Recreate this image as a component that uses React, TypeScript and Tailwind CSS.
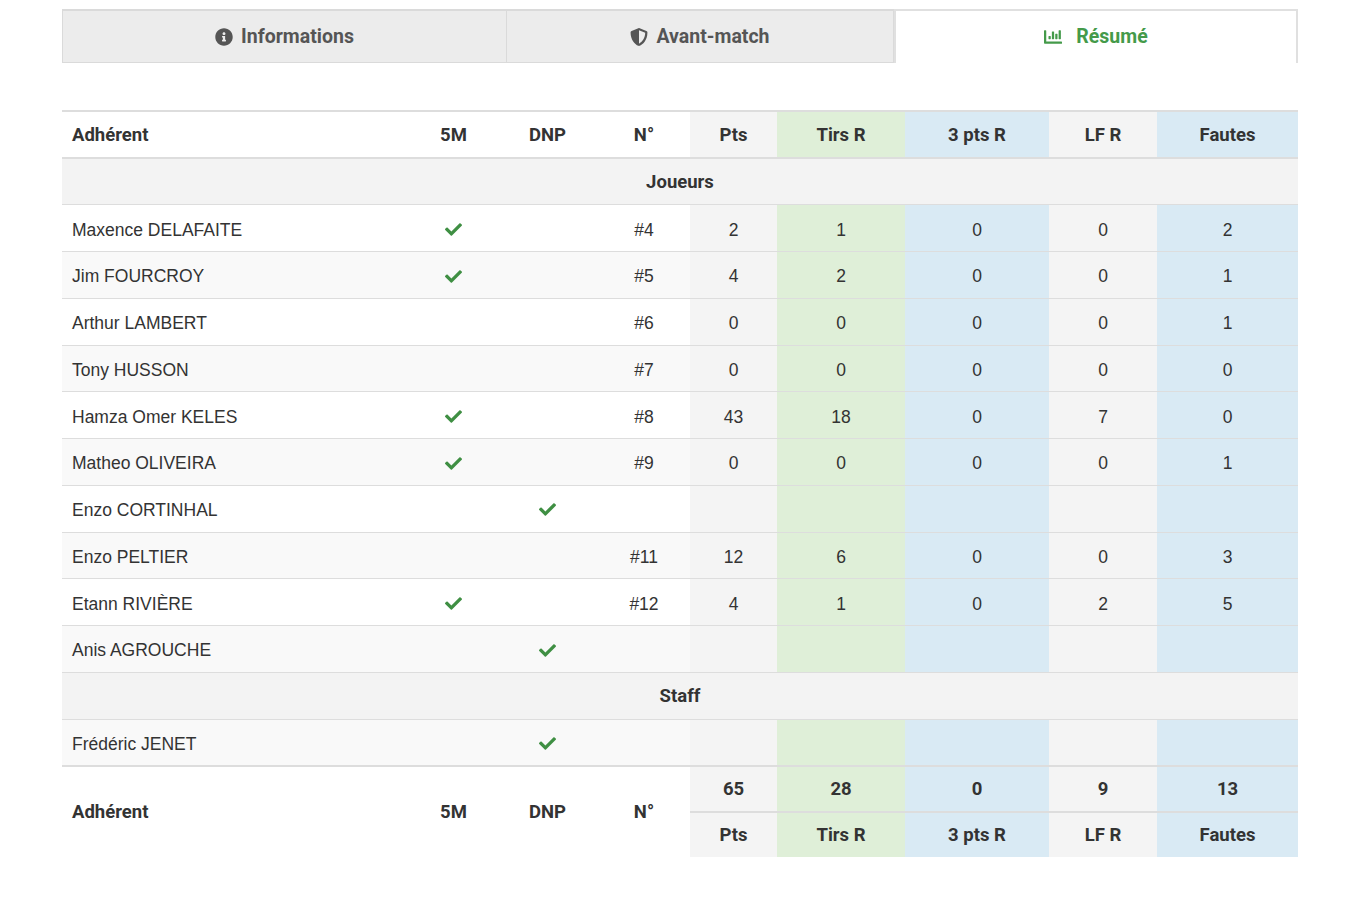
import { FaInfoCircle, FaShieldAlt, FaChartBar, FaCheck } from "react-icons/fa";

type Player = {
  name: string;
  five?: boolean;
  dnp?: boolean;
  num?: string;
  stats?: [number, number, number, number, number];
};

const joueurs: Player[] = [
  { name: "Maxence DELAFAITE", five: true, num: "#4", stats: [2, 1, 0, 0, 2] },
  { name: "Jim FOURCROY", five: true, num: "#5", stats: [4, 2, 0, 0, 1] },
  { name: "Arthur LAMBERT", num: "#6", stats: [0, 0, 0, 0, 1] },
  { name: "Tony HUSSON", num: "#7", stats: [0, 0, 0, 0, 0] },
  { name: "Hamza Omer KELES", five: true, num: "#8", stats: [43, 18, 0, 7, 0] },
  { name: "Matheo OLIVEIRA", five: true, num: "#9", stats: [0, 0, 0, 0, 1] },
  { name: "Enzo CORTINHAL", dnp: true },
  { name: "Enzo PELTIER", num: "#11", stats: [12, 6, 0, 0, 3] },
  { name: "Etann RIVIÈRE", five: true, num: "#12", stats: [4, 1, 0, 2, 5] },
  { name: "Anis AGROUCHE", dnp: true },
];

const staff: Player[] = [{ name: "Frédéric JENET", dnp: true }];

// couleurs des colonnes statistiques
const statCols = [
  { label: "Pts", bg: "bg-[#f4f4f4]", w: "w-[87px]" },
  { label: "Tirs R", bg: "bg-[#dfefd8]", w: "w-[128px]" },
  { label: "3 pts R", bg: "bg-[#d9eaf4]", w: "w-[144px]" },
  { label: "LF R", bg: "bg-[#f4f4f4]", w: "w-[108px]" },
  { label: "Fautes", bg: "bg-[#d9eaf4]", w: "w-[141px]" },
];

const totals = [65, 28, 0, 9, 13];

const head = "font-['Roboto',sans-serif] font-bold text-[18.5px] text-[#333]";
const body = "font-['Liberation_Sans',Arial,sans-serif] text-[17.5px] text-[#333]";

function Check() {
  return <FaCheck className="inline-block text-[#3f8f43]" size={17} />;
}

function Tabs() {
  return (
    <div className="flex h-[54px] font-['Roboto',sans-serif] text-[19.5px] font-bold">
      <div className="w-[445px] flex items-center justify-center gap-2 bg-[#ececec] border border-[#dadada] border-t-2 text-[#555]">
        <FaInfoCircle size={18} className="text-[#555]" />
        <span>Informations</span>
      </div>
      <div className="w-[387px] flex items-center justify-center gap-2 bg-[#ececec] border border-l-0 border-[#dadada] border-t-2 text-[#555]">
        <FaShieldAlt size={18} className="text-[#555]" />
        <span>Avant-match</span>
      </div>
      <div className="w-[404px] flex items-center justify-center gap-[14px] bg-white border-x-2 border-t-2 border-[#e0e0e0] text-[#449a4a]">
        <FaChartBar size={18} />
        <span>Résumé</span>
      </div>
    </div>
  );
}

function Row({ p, striped }: { p: Player; striped: boolean }) {
  const rowBg = striped ? "bg-[#f9f9f9]" : "bg-white";
  return (
    <tr className={`h-[46.75px] border-t border-[#dddddd] ${body}`}>
      <td className={`${rowBg} pl-[10px] pt-[3px]`}>{p.name}</td>
      <td className={`${rowBg} text-center`}>{p.five && <Check />}</td>
      <td className={`${rowBg} text-center`}>{p.dnp && <Check />}</td>
      <td className={`${rowBg} text-center pt-[3px]`}>{p.num}</td>
      {statCols.map((c, i) => (
        <td key={c.label} className={`${c.bg} text-center pt-[3px]`}>
          {p.stats ? p.stats[i] : ""}
        </td>
      ))}
    </tr>
  );
}

function GroupRow({ label }: { label: string }) {
  return (
    <tr className="h-[46.75px] border-t border-[#dddddd]">
      <td colSpan={9} className={`bg-[#f3f3f3] text-center pt-[3px] ${head}`}>
        {label}
      </td>
    </tr>
  );
}

export default function App() {
  return (
    <div className="bg-white min-h-[900px] pt-[9px] px-[62px]">
      <Tabs />
      <table className="mt-[47px] w-[1236px] border-collapse table-fixed">
        <thead>
          <tr className={`h-[47px] border-t-2 border-b-2 border-[#dddddd] ${head}`}>
            <th className="w-[348px] text-left pl-[10px] pt-[3px] bg-white">Adhérent</th>
            <th className="w-[87px] pt-[3px] bg-white">5M</th>
            <th className="w-[101px] pt-[3px] bg-white">DNP</th>
            <th className="w-[92px] pt-[3px] bg-white">N°</th>
            {statCols.map((c) => (
              <th key={c.label} className={`${c.w} ${c.bg} pt-[3px]`}>
                {c.label}
              </th>
            ))}
          </tr>
        </thead>
        <tbody>
          <GroupRow label="Joueurs" />
          {joueurs.map((p, i) => (
            <Row key={p.name} p={p} striped={i % 2 === 1} />
          ))}
          <GroupRow label="Staff" />
          {staff.map((p) => (
            <Row key={p.name} p={p} striped />
          ))}
        </tbody>
        <tfoot className={head}>
          <tr className="h-[46px] border-t-2 border-[#dddddd]">
            <th rowSpan={2} className="text-left pl-[10px] pt-[3px] bg-white">Adhérent</th>
            <th rowSpan={2} className="pt-[3px] bg-white">5M</th>
            <th rowSpan={2} className="pt-[3px] bg-white">DNP</th>
            <th rowSpan={2} className="pt-[3px] bg-white">N°</th>
            {statCols.map((c, i) => (
              <th key={c.label} className={`${c.bg} pt-[3px] border-b-2 border-[#dddddd]`}>
                {totals[i]}
              </th>
            ))}
          </tr>
          <tr className="h-[45px]">
            {statCols.map((c) => (
              <th key={c.label} className={`${c.bg} pt-[3px]`}>
                {c.label}
              </th>
            ))}
          </tr>
        </tfoot>
      </table>
    </div>
  );
}
